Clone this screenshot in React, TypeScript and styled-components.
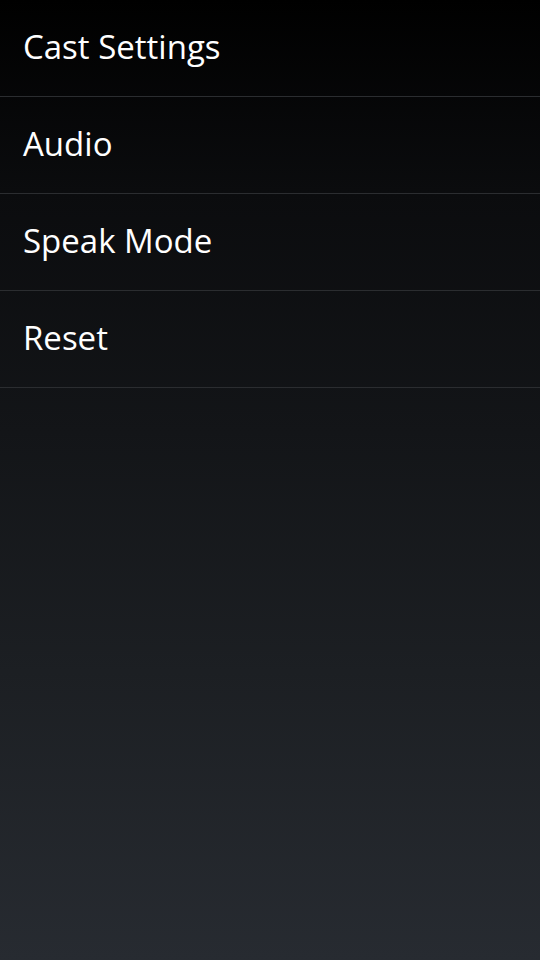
import React from "react";
import styled, { createGlobalStyle } from "styled-components";

const Global = createGlobalStyle`
  html, body { margin: 0; padding: 0; height: 100%; }
  body { background: #000; }
  #root { min-height: 100%; }
`;

const Screen = styled.div`
  width: 540px;
  height: 960px;
  background: linear-gradient(
    to bottom,
    #000000 0%,
    #0b0c0e 20%,
    #131518 45%,
    #1c1f23 70%,
    #272b31 100%
  );
  font-family: "Open Sans", "Noto Sans", sans-serif;
  display: flex;
  flex-direction: column;
`;

const Row = styled.div`
  height: 97px;
  flex-shrink: 0;
  box-sizing: border-box;
  padding: 0 0 4px 23px;
  border-bottom: 1px solid #2b2d30;
  display: flex;
  align-items: center;
  color: #ffffff;
  font-size: 33px;
`;

const items = ["Cast Settings", "Audio", "Speak Mode", "Reset"];

export default function App() {
  return (
    <>
      <Global />
      <Screen>
        {items.map((t) => (
          <Row key={t}>{t}</Row>
        ))}
      </Screen>
    </>
  );
}
